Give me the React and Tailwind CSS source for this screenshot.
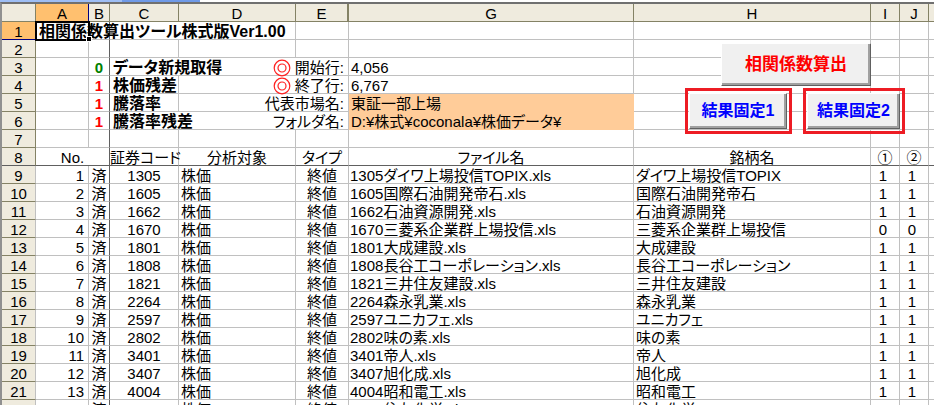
import clsx from "clsx";

const columns = ["A", "B", "C", "D", "E", "G", "H", "I", "J"];

const stocks = [
    { code: "1305", name: "ダイワ上場投信TOPIX", flag: 1 },
    { code: "1605", name: "国際石油開発帝石", flag: 1 },
    { code: "1662", name: "石油資源開発", flag: 1 },
    { code: "1670", name: "三菱系企業群上場投信", flag: 0 },
    { code: "1801", name: "大成建設", flag: 1 },
    { code: "1808", name: "長谷工コーポレーション", flag: 1 },
    { code: "1821", name: "三井住友建設", flag: 1 },
    { code: "2264", name: "森永乳業", flag: 1 },
    { code: "2597", name: "ユニカフェ", flag: 1 },
    { code: "2802", name: "味の素", flag: 1 },
    { code: "3401", name: "帝人", flag: 1 },
    { code: "3407", name: "旭化成", flag: 1 },
    { code: "4004", name: "昭和電工", flag: 1 },
    { code: "4005", name: "住友化学", flag: 1 },
];

const settings = [
    { flag: 0, title: "データ新規取得", label: "開始行:", value: "4,056", mark: true, spill: true },
    { flag: 1, title: "株価残差", label: "終了行:", value: "6,767", mark: true },
    { flag: 1, title: "騰落率", label: "代表市場名:", value: "東証一部上場", filled: true },
    { flag: 1, title: "騰落率残差", label: "フォルダ名:", value: "D:¥株式¥coconala¥株価データ¥", filled: true, spill: true },
];

function Cell({ className, children, ...props }) {
    return (
        <td className={clsx("h-[18px] border-b border-b-[#c0c0c0] pt-0.5 pb-0 whitespace-nowrap", className)} {...props}>
            {children}
        </td>
    );
}

function RowHead({ n, selected }) {
    return (
        <th
            scope="row"
            className={clsx(
                "h-[18px] border-r border-b pt-0.5 pb-0 text-center font-normal",
                selected ? "border-r-[#848265] border-b-[#000080] bg-[#ffc06f]" : "border-[#848265] bg-[#efebde]"
            )}
        >
            {n}
        </th>
    );
}

function DoubleCircle() {
    return (
        <svg width="18" height="18" viewBox="0 0 18 18" fill="none" stroke="#ff2020" aria-hidden="true">
            <circle cx="9" cy="9" r="7.8" strokeWidth="1.2" />
            <circle cx="9" cy="9" r="4" strokeWidth="1.2" />
        </svg>
    );
}

// blank cells from the given column to the right edge
function EmptyCells({ from }) {
    return (
        <>
            {columns.slice(columns.indexOf(from)).map((c) => (
                <Cell key={c} className={c === "B" ? "border-r border-r-[#606060]" : "border-r border-r-[#c0c0c0]"} />
            ))}
            <Cell />
        </>
    );
}

function MacroButton({ className, children }) {
    return (
        <button
            type="button"
            className={clsx(
                "border-t border-l border-r border-b border-t-white border-l-white border-r-[#606060] border-b-[#606060] bg-[#f0f0f0] p-0 font-bold whitespace-nowrap shadow-[inset_-2px_-2px_0_#a0a0a0]",
                className
            )}
        >
            {children}
        </button>
    );
}

function Sheet() {
    return (
        <table className="w-full table-fixed border-separate border-spacing-0">
            <colgroup>
                <col className="w-[34px]" />
                <col className="w-[53px]" />
                <col className="w-[21px]" />
                <col className="w-[69px]" />
                <col className="w-[117px]" />
                <col className="w-[53px]" />
                <col className="w-[285px]" />
                <col className="w-[237px]" />
                <col className="w-[29px]" />
                <col className="w-[29px]" />
                <col />
            </colgroup>
            <thead>
                <tr>
                    <th className="h-[18px] border-r border-b border-[#848265] bg-[#efebde] p-0" />
                    {columns.map((c) => (
                        <th
                            key={c}
                            scope="col"
                            className={clsx(
                                "h-[18px] border-b pt-0.5 pb-0 text-center font-normal",
                                c === "A" ? "border-[#000080] bg-[#ffc06f]" : "border-[#848265] bg-[#efebde]",
                                c === "E" ? "border-r-2" : "border-r"
                            )}
                        >
                            {c}
                        </th>
                    ))}
                    <th className="h-[18px] border-b border-[#848265] bg-[#efebde] p-0" />
                </tr>
            </thead>
            <tbody>
                <tr>
                    <RowHead n={1} selected />
                    <Cell className="relative pl-[3px] text-base leading-[15px] font-bold outline-2 -outline-offset-1 outline-black">
                        相関係数算出ツール株式版Ver1.00
                        <span className="absolute -right-[2px] -bottom-[2px] size-1 bg-black outline outline-white" />
                    </Cell>
                    <Cell className="border-r border-r-[#606060]" />
                    <Cell />
                    <EmptyCells from="D" />
                </tr>
                <tr>
                    <RowHead n={2} />
                    <EmptyCells from="A" />
                </tr>
                {settings.map((s, i) => (
                    <tr key={s.title}>
                        <RowHead n={i + 3} />
                        <Cell className="border-r border-r-[#c0c0c0]" />
                        <Cell
                            className={clsx(
                                "border-r border-r-[#606060] text-center font-bold",
                                s.flag ? "text-[#ff0000]" : "text-[#008000]"
                            )}
                        >
                            {s.flag}
                        </Cell>
                        <Cell className={clsx("pl-[3px] text-base leading-[15px] font-bold", !s.spill && "border-r border-r-[#c0c0c0]")}>
                            {s.title}
                        </Cell>
                        <Cell colSpan={2} className="border-r border-r-[#c0c0c0] pr-1">
                            <div className="flex h-[15px] items-center justify-end gap-1">
                                {s.mark && <DoubleCircle />}
                                {s.label}
                            </div>
                        </Cell>
                        <Cell className={clsx("border-r pl-0.5", s.filled ? "border-[#ffcc99]! bg-[#ffcc99]" : "border-r-[#c0c0c0]")}>
                            {s.value}
                        </Cell>
                        <EmptyCells from="H" />
                    </tr>
                ))}
                <tr>
                    <RowHead n={7} />
                    <EmptyCells from="A" />
                </tr>
                <tr className="text-center *:border-b-[#606060]">
                    <RowHead n={8} />
                    <Cell colSpan={2} className="border-r border-r-[#606060]">No.</Cell>
                    {["証券コード", "分析対象", "タイプ", "ファイル名", "銘柄名", "①", "②"].map((h) => (
                        <Cell key={h} className="border-r border-r-[#c0c0c0]">{h}</Cell>
                    ))}
                    <Cell />
                </tr>
                {stocks.map((s, i) => (
                    <tr key={s.code} className="*:border-r *:border-r-[#c0c0c0] *:last:border-r-0">
                        <RowHead n={i + 9} />
                        <Cell className="pr-1 text-right">{i + 1}</Cell>
                        <Cell className="border-r-[#606060]! text-center">済</Cell>
                        <Cell className="text-center">{s.code}</Cell>
                        <Cell className="pl-0.5">株価</Cell>
                        <Cell className="text-center">終値</Cell>
                        <Cell className="pl-px">{s.code}{s.name}.xls</Cell>
                        <Cell className="pl-0.5">{s.name}</Cell>
                        <Cell className="pr-1 text-center">{s.flag}</Cell>
                        <Cell className="pr-1 text-center">{s.flag}</Cell>
                        <Cell />
                    </tr>
                ))}
            </tbody>
        </table>
    );
}

export default function App() {
    return (
        <div className="h-screen overflow-hidden bg-white font-['Liberation_Sans','Noto_Sans_CJK_JP',sans-serif] text-[15px] leading-[15px] text-black [font-feature-settings:'palt']">
            <div className="flex h-0.5">
                <div className="w-[122px] bg-[#9ebef5]" />
                <div className="w-[78px] bg-[#6f9ae8]" />
            </div>
            <div className="relative border-t-2 border-l-2 border-t-[#707070] border-l-[#909090]">
                <Sheet />
                <MacroButton className="absolute top-[39px] left-[719px] h-[43px] w-[150px] text-[17px] text-[#ff0000]">
                    相関係数算出
                </MacroButton>
                <div className="absolute top-[84px] left-[683px] flex h-[46px] w-[107px] border-3 border-[#ed1c24] pt-0.5 pr-0.5 pb-0.5 pl-px">
                    <MacroButton className="w-full text-base text-[#0000ff]">結果固定1</MacroButton>
                </div>
                <div className="absolute top-[84px] left-[801px] flex h-[46px] w-[102px] border-3 border-[#ed1c24] pt-0.5 pr-0.5 pb-0.5 pl-px">
                    <MacroButton className="w-full text-base text-[#0000ff]">結果固定2</MacroButton>
                </div>
            </div>
        </div>
    );
}
